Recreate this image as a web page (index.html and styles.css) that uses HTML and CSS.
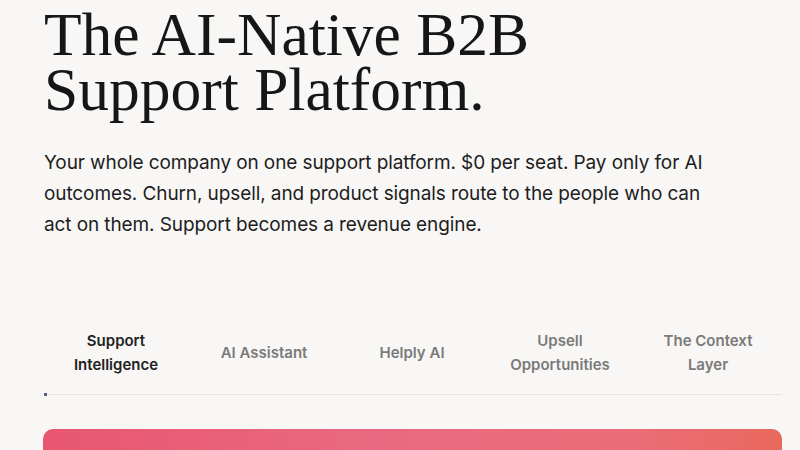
FILE: index.html
```html
<!DOCTYPE html>
<html lang="en">
<head>
<meta charset="utf-8">
<title>Helply</title>
<link rel="stylesheet" href="styles.css">
</head>
<body>
<main class="hero">
  <h1 class="title">The AI-Native B2B<br>Support Platform.</h1>
  <p class="lead">Your whole company on one support platform. $0 per seat. Pay only for AI outcomes. Churn, upsell, and product signals route to the people who can act on them. Support becomes a revenue engine.</p>
  <nav class="tabs">
    <div class="tab active">Support<br>Intelligence</div>
    <div class="tab">AI Assistant</div>
    <div class="tab">Helply AI</div>
    <div class="tab">Upsell<br>Opportunities</div>
    <div class="tab">The Context<br>Layer</div>
  </nav>
  <div class="progress"><span class="progress-bar"></span></div>
  <div class="card"></div>
</main>
</body>
</html>
```
FILE: styles.css
```css
html, body {
  margin: 0;
  padding: 0;
  background: #f8f7f5;
  overflow: hidden;
}
.hero {
  padding: 0 18px 0 44px;
  display: flex;
  flex-direction: column;
}
.title {
  margin: 7px 0 0;
  font-family: "Liberation Serif", "DejaVu Serif", serif;
  font-weight: 400;
  font-size: 61.5px;
  line-height: 55px;
  color: #161616;
}
.lead {
  margin: 30px 0 0;
  font-family: Inter, "Liberation Sans", sans-serif;
  font-size: 19px;
  line-height: 31px;
  color: #1d1d1d;
  max-width: 680px;
  letter-spacing: -0.1px;
}
.tabs {
  margin-top: 87px;
  display: grid;
  grid-template-columns: repeat(5, 1fr);
  margin-left: -2px;
  height: 52px;
  align-items: center;
}
.tab {
  text-align: center;
  font-family: Inter, "Liberation Sans", sans-serif;
  font-weight: 600;
  font-size: 15px;
  line-height: 24px;
  color: #7a7a7a;
}
.tab.active {
  color: #222;
}
.progress {
  margin-top: 15px;
  height: 1px;
  background: #e6e4e1;
  position: relative;
}
.progress-bar {
  position: absolute;
  left: 0;
  top: -1px;
  width: 3px;
  height: 3px;
  background: #5b5a86;
}
.card {
  margin-top: 34px;
  margin-left: -1px;
  height: 80px;
  border-radius: 10px;
  background: linear-gradient(90deg, #e8566f 0%, #e96a80 45%, #ea6d78 80%, #e9685c 100%);
}
```
